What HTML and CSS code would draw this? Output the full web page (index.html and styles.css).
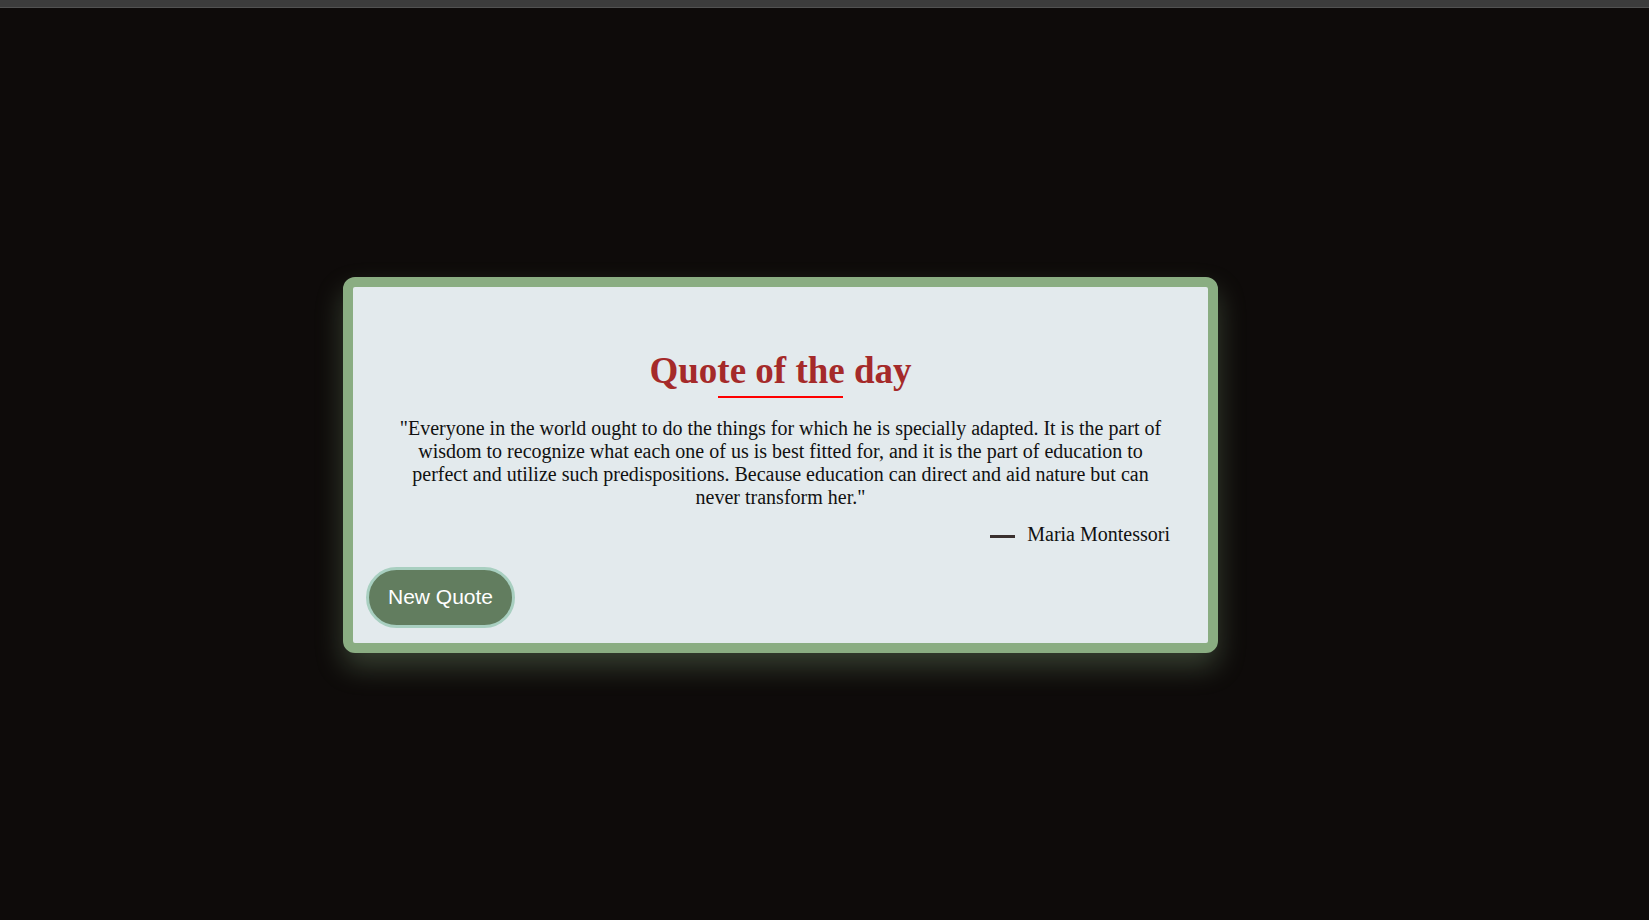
FILE: index.html
```html
<!DOCTYPE html>
<html lang="en">
<head>
<meta charset="utf-8">
<title>Quote of the day</title>
<link rel="stylesheet" href="styles.css">
</head>
<body>
<div class="topbar"></div>
<main class="stage">
  <section class="card">
    <h1 class="title">Quote of the day</h1>
    <div class="title-line"></div>
    <p class="quote">"Everyone in the world ought to do the things for which he is specially adapted. It is the part of wisdom to recognize what each one of us is best fitted for, and it is the part of education to perfect and utilize such predispositions. Because education can direct and aid nature but can never transform her."</p>
    <div class="author"><span class="dash"></span><span class="name">Maria Montessori</span></div>
    <div class="actions"><button class="btn" type="button">New Quote</button></div>
  </section>
</main>
</body>
</html>
```

FILE: styles.css
```css
html, body {
  margin: 0;
  padding: 0;
}
body {
  background: #0e0b0a;
  font-family: "Liberation Serif", "Times New Roman", serif;
  color: #111;
}
.topbar {
  height: 7px;
  background: #3c3c3c;
  border-bottom: 1px solid #525252;
}
.stage {
  height: 911px;
  padding-top: 1px;
  display: flex;
  align-items: center;
  justify-content: center;
  padding-right: 88px;
}
.card {
  width: 875px;
  box-sizing: border-box;
  background: #e3eaed;
  border: 10px solid #8aad82;
  border-radius: 12px;
  padding: 0 0 15px 0;
  box-shadow: 0 14px 28px rgba(139, 173, 130, 0.32);
  display: flex;
  flex-direction: column;
}
.title {
  margin: 63px 0 0;
  font-size: 37px;
  line-height: 42px;
  font-weight: bold;
  color: #a52a2a;
  text-align: center;
}
.title-line {
  width: 125px;
  height: 2px;
  background: #ff0000;
  margin: 4px auto 0;
}
.quote {
  margin: 19px 0 0;
  padding: 0 38px;
  font-size: 20px;
  line-height: 23px;
  text-align: center;
}
.author {
  margin-top: 14px;
  padding-right: 38px;
  display: flex;
  justify-content: flex-end;
  align-items: center;
  gap: 12px;
  font-size: 20px;
  line-height: 23px;
}
.dash {
  width: 25px;
  height: 3px;
  background: #3a302e;
  margin-top: 5px;
}
.actions {
  margin-top: 21px;
  padding-left: 13px;
  display: flex;
}
.btn {
  height: 61px;
  box-sizing: border-box;
  padding: 0 19px;
  border: 3px solid #a8cfc0;
  border-radius: 31px;
  background: #627d5f;
  color: #fff;
  font-family: "Liberation Sans", Arial, sans-serif;
  font-size: 21px;
  cursor: pointer;
}
```
